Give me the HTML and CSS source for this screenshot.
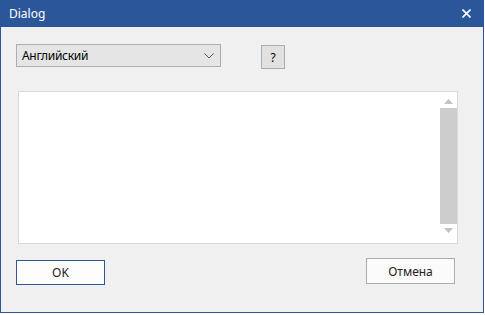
FILE: index.html
```html
<!DOCTYPE html>
<html lang="ru">
<head>
  <meta charset="UTF-8">
  <title>Dialog</title>
  <link rel="stylesheet" href="styles.css">
</head>
<body>
  <div class="window">
    <div class="titlebar">
      <span class="title">Dialog</span>
      <svg class="close" width="9" height="9" viewBox="0 0 9 9">
        <path d="M0.5 0.5 L8.5 8.5 M8.5 0.5 L0.5 8.5" stroke="#fff" stroke-width="1.6" fill="none"/>
      </svg>
    </div>
    <div class="content">
      <div class="top-row">
        <div class="combo">
          <span>Английский</span>
          <svg width="10" height="6" viewBox="0 0 10 6">
            <path d="M0.5 0.5 L5 5 L9.5 0.5" stroke="#555" stroke-width="1" fill="none"/>
          </svg>
        </div>
        <button class="help-button">?</button>
      </div>
      <div class="text-box">
        <div class="scrollbar">
          <svg width="9" height="5" viewBox="0 0 9 5"><path d="M0 5 L4.5 0 L9 5 Z" fill="#c2c2c2"/></svg>
          <div class="thumb"></div>
          <svg width="9" height="5" viewBox="0 0 9 5"><path d="M0 0 L4.5 5 L9 0 Z" fill="#c2c2c2"/></svg>
        </div>
      </div>
      <div class="button-row">
        <button class="ok-button">OK</button>
        <button class="cancel-button">Отмена</button>
      </div>
    </div>
  </div>
  <div class="backdrop"></div>
</body>
</html>
```

FILE: styles.css
```css
body {
  margin: 0;
  background: #ffffff;
  font-family: "Noto Sans", "Liberation Sans", sans-serif;
  font-size: 12px;
  color: #000;
}

.window {
  width: 482px;
  height: 312px;
  border: 1px solid #2b579a;
  border-top: none;
  background: #f0f0f0;
  display: flex;
  flex-direction: column;
}

.titlebar {
  height: 27px;
  background: #2b579a;
  display: flex;
  align-items: center;
  justify-content: space-between;
  padding: 0 13px 0 9px;
  margin: 0 -1px;
}

.title {
  color: #fff;
  font-size: 12px;
  margin-top: -1px;
}

.close {
  margin-top: -1px;
}

.content {
  flex: 1;
  padding: 17px 0 0 15px;
}

.top-row {
  display: flex;
  align-items: flex-start;
}

.combo {
  width: 192px;
  height: 21px;
  border: 1px solid #adadad;
  background: #e5e5e5;
  display: flex;
  align-items: center;
  justify-content: space-between;
  padding: 0 6px 0 5px;
  letter-spacing: -0.3px;
}

.combo span {
  margin-top: -1px;
}

.help-button {
  width: 24px;
  height: 24px;
  margin: 1px 0 0 40px;
  padding: 0;
  border: 1px solid #adadad;
  background: #e1e1e1;
  font-family: inherit;
  font-size: 12px;
  color: #000;
}

.text-box {
  width: 438px;
  height: 151px;
  margin: 22px 0 0 2px;
  border: 1px solid #d9d9d9;
  background: #fff;
  display: flex;
  justify-content: flex-end;
}

.scrollbar {
  width: 17px;
  display: flex;
  flex-direction: column;
  align-items: center;
  padding-top: 7px;
  gap: 4px;
}

.thumb {
  width: 17px;
  height: 116px;
  background: #cdcdcd;
}

.button-row {
  display: flex;
  justify-content: space-between;
  align-items: flex-start;
  width: 439px;
  margin-top: 14px;
}

.ok-button,
.cancel-button {
  font-family: inherit;
  font-size: 12px;
  color: #222;
  padding: 0;
}

.ok-button {
  width: 89px;
  height: 25px;
  margin-top: 2px;
  background: #fdfdfd;
  border: 1px solid #2b579a;
}

.cancel-button {
  width: 89px;
  height: 26px;
  background: #fbfbfb;
  border: 1px solid #adadad;
}

.backdrop {
  height: 3px;
  background: #fff;
}
```
